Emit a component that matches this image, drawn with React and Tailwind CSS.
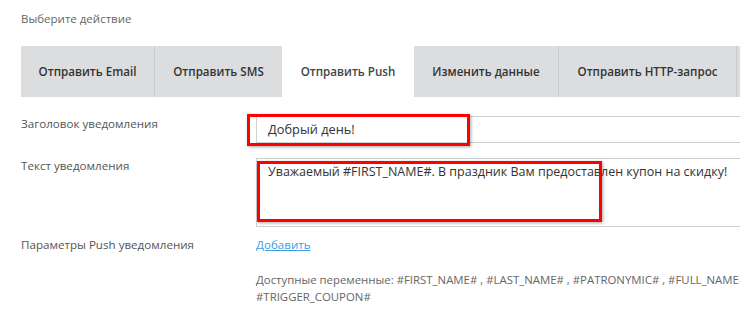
import React from 'react';

const tabs = [
  { label: 'Отправить Email', w: 'w-[133px]' },
  { label: 'Отправить SMS', w: 'w-[128px]' },
  { label: 'Отправить Push', w: 'w-[132px]', active: true },
  { label: 'Изменить данные', w: 'w-[144px]' },
  { label: 'Отправить HTTP-запрос', w: 'w-[178px]' },
  { label: 'Условие', w: 'w-[120px]' },
];

export default function App() {
  return (
    <div
      className="relative w-[740px] h-[319px] overflow-hidden bg-white pl-[21px]"
      style={{ fontFamily: '"Open Sans", "Liberation Sans", sans-serif' }}
    >
      <div className="pt-[10px] text-[11.5px] leading-[18px] text-[#666]">Выберите действие</div>

      {/* tabs */}
      <div className="mt-[18px] flex h-[51px] w-[900px]">
        {tabs.map((t, i) => (
          <div
            key={t.label}
            className={`${t.w} shrink-0 flex items-center justify-center text-[11.6px] font-semibold ${
              t.active ? 'bg-white text-[#444]' : 'bg-[#dcdddf] text-[#333]'
            } ${i > 0 && !t.active && !tabs[i - 1].active ? 'border-l border-[#c9cacd]' : ''}`}
          >
            {t.label}
          </div>
        ))}
      </div>

      {/* form */}
      <div className="mt-[19px] grid grid-cols-[235px_1fr] w-[1000px] text-[11.6px] text-[#555]">
        <div className="leading-[18px] -mt-[1px]">Заголовок уведомления</div>
        <div className="h-[27px] border border-[#cfd0d2] flex items-center pl-[11px] text-[12.8px] text-[#333]">
          Добрый день!
        </div>

        <div className="mt-[15px] leading-[18px] -translate-y-[1px]">Текст уведомления</div>
        <div className="mt-[15px] h-[69px] border border-[#cfd0d2] pl-[11px] pt-[3px] text-[12.5px] leading-[20px] text-[#333]">
          Уважаемый #FIRST_NAME#. В праздник Вам предоставлен купон на скидку!
        </div>

        <div className="mt-[9px] leading-[18px]">Параметры Push уведомления</div>
        <div className="mt-[9px] leading-[18px]">
          <span className="text-[#3a9ee6] underline">Добавить</span>
        </div>

        <div />
        <div className="mt-[17px] text-[11.4px] leading-[17px] text-[#666] whitespace-nowrap">
          Доступные переменные: #FIRST_NAME# , #LAST_NAME# , #PATRONYMIC# , #FULL_NAME# , #EMAIL# , #PHONE# ,
          <br />
          #TRIGGER_COUPON#
        </div>
      </div>

      {/* annotation boxes */}
      <div className="absolute left-[247px] top-[114px] w-[223px] h-[32px] border-[3px] border-[#ff0000] shadow-[1px_1px_3px_rgba(0,0,0,0.35)]" />
      <div className="absolute left-[257px] top-[161px] w-[345px] h-[61px] border-[3px] border-[#ff0000] shadow-[1px_1px_3px_rgba(0,0,0,0.35)]" />
    </div>
  );
}
